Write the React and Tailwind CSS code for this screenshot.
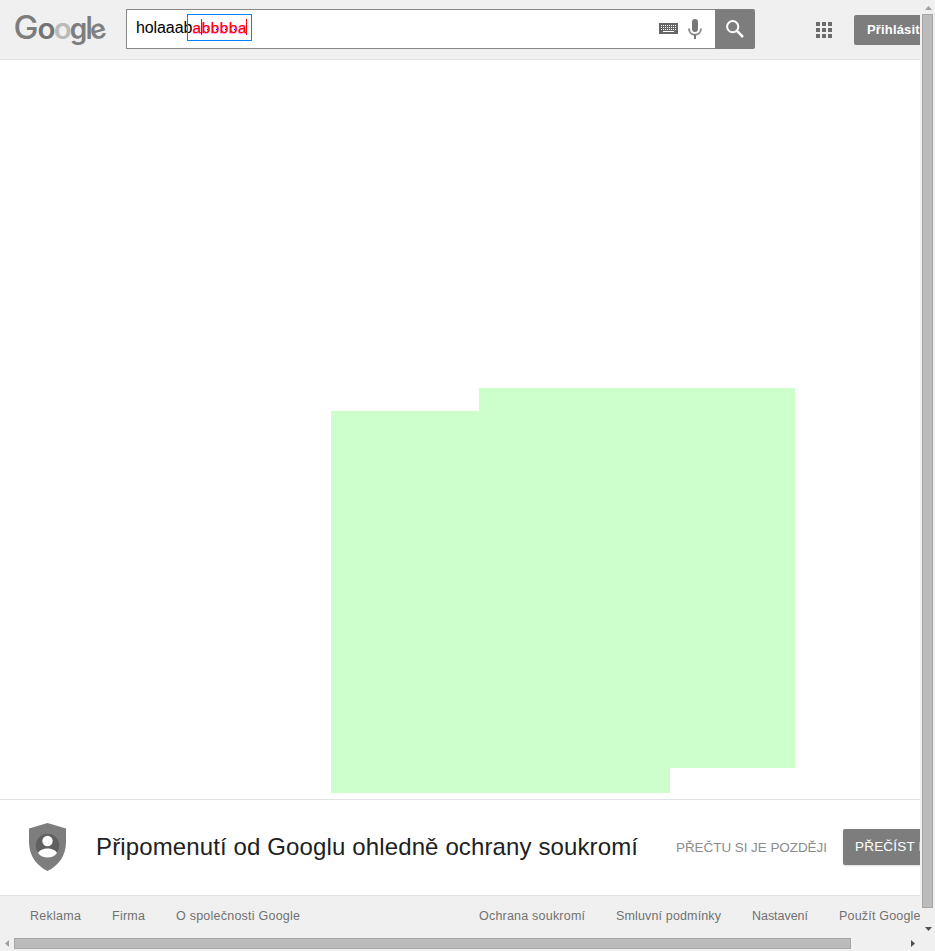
const SANS = "font-['Liberation_Sans',Arial,sans-serif]";

function Logo() {
  return (
    <svg width="96" height="44" viewBox="0 0 96 44" className="shrink-0 overflow-visible font-['Inter',sans-serif] font-semibold" fill="#7d7d7d" aria-label="Google">
      <text x="-0.5" y="27.500" fontSize="32" textLength="25" lengthAdjust="spacingAndGlyphs" className="font-medium">G</text>
      <text x="23.500" y="27.500" fontSize="28.5" textLength="18" lengthAdjust="spacingAndGlyphs" fill="#747474">o</text>
      <text x="39.700" y="27.500" fontSize="28.5" textLength="18" lengthAdjust="spacingAndGlyphs" fill="#bababa">o</text>
      <text x="55.800" y="27.500" fontSize="28" textLength="17.500" lengthAdjust="spacingAndGlyphs">g</text>
      <text x="71.300" y="27.500" fontSize="31" className="font-medium">l</text>
      <text x="76" y="27.500" fontSize="27" textLength="16" lengthAdjust="spacingAndGlyphs" transform="rotate(-16 84 20)" fill="#808080">e</text>
    </svg>
  );
}

function KeyboardIcon() {
  const dots = [];
  for (let r = 0; r < 3; r++) for (let c = 0; c < 8; c++) dots.push([2 + c * 2, 2 + r * 2]);
  return (
    <svg width="19" height="11" className="-mt-[2px] shrink-0" shapeRendering="crispEdges">
      <rect width="19" height="11" fill="#666" />
      {dots.map(([x, y]) => <rect key={`${x}-${y}`} x={x} y={y} width="1" height="1" fill="#fff" />)}
      <rect x="4" y="8" width="11" height="1" fill="#fff" />
    </svg>
  );
}

function MicIcon() {
  return (
    <svg width="14" height="20" viewBox="0 0 14 20" className="shrink-0">
      <rect x="4" y="0" width="6" height="13" rx="3" fill="#777" />
      <path d="M1 9.500c0 3.900 2.600 6.300 6 6.300s6-2.400 6-6.300" fill="none" stroke="#8a8a8a" strokeWidth="1.900" />
      <path d="M7 15.500V20" stroke="#777" strokeWidth="2" />
    </svg>
  );
}

function Header() {
  return (
    <header className="flex h-[60px] shrink-0 items-start border-b border-[#e2e2e2] bg-[#f0f0f0]">
      <div className="ml-[14px] mt-[11px] flex w-[112px] shrink-0"><Logo /></div>
      <div className="mt-[9px] flex h-10 w-[629px] shrink-0">
        <div className="relative flex w-[589px] items-center border border-r-0 border-[#888] bg-white pl-[9px] pr-[13px]">
          <span className="-mt-[3px] whitespace-pre text-base tracking-[-0.1px] text-black">holaaab</span>
          <div className="absolute left-[60px] top-[4px] h-[27px] w-[65px] border border-[#0080ff]">
            <svg width="63" height="25" fontSize="15.500">
              <text x="4" y="18.500" fill="#f0f" fillOpacity="0.45" textLength="54">abbbba</text>
              <text x="4.600" y="18" fill="#f00" stroke="#f00" strokeWidth="0.150" textLength="54">abbbba</text>
              <path d="M13.500 4v16M58.500 4v16" stroke="#f00" />
              <path d="M19 14.500h1M28 14.500h1M37 14.500h1M46 14.500h1" stroke="#00f" />
            </svg>
          </div>
          <div className="ml-auto flex items-center gap-[10px]">
            <KeyboardIcon />
            <MicIcon />
          </div>
        </div>
        <div className="flex w-10 items-center justify-center rounded-r-xs bg-[#7d7d7d]">
          <svg width="18" height="18" viewBox="0 0 18 18" fill="none" stroke="#fff">
            <circle cx="6.700" cy="6.700" r="5.600" strokeWidth="2" />
            <path d="M10.700 10.700L17 17" strokeWidth="2.500" />
          </svg>
        </div>
      </div>
      <div className="ml-[61px] mt-[22px] grid shrink-0 grid-cols-3 gap-[2px]">
        {Array.from({ length: 9 }, (_, i) => <i key={i} className="h-1 w-1 bg-[#6c6c6c]" />)}
      </div>
      <div className="ml-[22px] mt-[15px] h-[30px] w-[90px] shrink-0 rounded-xs bg-[#7d7d7d] pl-[13px] text-[13px] font-bold leading-[30px] tracking-[0.15px] text-white">Přihlásit</div>
    </header>
  );
}

function Notice() {
  return (
    <section className="flex h-[96px] shrink-0 items-center whitespace-nowrap border-t border-[#e2e2e2] bg-white pb-[2px]">
      <svg width="37" height="48" viewBox="0 0 37 48" className="ml-[29px] shrink-0">
        <path d="M18.500 0L37 5.500V19C37 33 29 43 18.500 48C8 43 0 33 0 19V5.500Z" fill="#7d7d7d" />
        <circle cx="18.500" cy="22.500" r="11.700" fill="#5f5f5f" />
        <circle cx="18.500" cy="18" r="5.200" fill="#fff" />
        <path d="M9 30C12 24 25 24 28 30C24 36 13 36 9 30Z" fill="#fff" />
      </svg>
      <h1 className="ml-[30px] w-[580px] shrink-0 text-2xl"><svg width="545" height="32" className="block"><text x="0" y="24" fill="#212121" textLength="542">Připomenutí od Googlu ohledně ochrany soukromí</text></svg></h1>
      <span className="w-[167px] shrink-0 text-[13.5px]"><svg width="155" height="22" className="block"><text x="0" y="16" fill="#8c8c8c" textLength="151">PŘEČTU SI JE POZDĚJI</text></svg></span>
      <div className="h-9 w-[120px] shrink-0 rounded-xs bg-[#7d7d7d] pl-3 text-[13.5px] leading-9 tracking-[0.2px] text-white shadow-sm">PŘEČÍST NYNÍ</div>
    </section>
  );
}

const LINKS = [
  ["Reklama", 82, 51], ["Firma", 64, 33], ["O společnosti Google", 303, 124], ["Ochrana soukromí", 137, 106],
  ["Smluvní podmínky", 136, 105], ["Nastavení", 87, 56], ["Použít Google.cz", 110, 98],
];

function Footer() {
  return (
    <footer className="flex h-[41px] shrink-0 items-center whitespace-nowrap border-t border-[#e2e2e2] bg-[#f0f0f0] pl-[30px] text-[12.5px]">
      {LINKS.map(([label, width, textWidth]) => (
        <a key={label} className="shrink-0" style={{ width }}>
          <svg width="110" height="20" className="block overflow-visible"><text x="0" y="14" fill="#707070" textLength={textWidth}>{label}</text></svg>
        </a>
      ))}
    </footer>
  );
}

export default function App() {
  return (
    <div className={`h-[951px] w-[935px] overflow-hidden bg-[#f0f0f0] ${SANS}`}>
      <div className="flex h-[936px]">
        <div className="flex w-[920px] flex-col overflow-hidden bg-white">
          <Header />
          <main className="flex h-[739px] shrink-0 pl-[331px] pt-[328px]">
            <div className="mt-[23px] h-[382px] w-[148px] bg-[#ccffcc]" />
            <div className="h-[405px] w-[191px] bg-[#ccffcc]" />
            <div className="h-[380px] w-[125px] bg-[#ccffcc]" />
          </main>
          <Notice />
          <Footer />
        </div>
        <div className="flex w-[15px] flex-col items-center pl-px">
          <svg width="9" height="14" className="shrink-0"><path d="M1 10L4.500 6L8 10Z" fill="#a0a0a0" /></svg>
          <div className="-ml-px h-[894px] w-[11px] shrink-0 border border-[#a6a6a6] bg-[#bbb]" />
          <svg width="9" height="9" className="mt-[17px] shrink-0"><path d="M1 2L8 2L4.500 6Z" fill="#505050" /></svg>
        </div>
      </div>
      <div className="flex h-[15px] items-center">
        <svg width="14" height="11" className="shrink-0"><path d="M9 2L5 5.500L9 9Z" fill="#a0a0a0" /></svg>
        <div className="h-[11px] w-[837px] shrink-0 border border-[#a6a6a6] bg-[#bbb]" />
        <svg width="8" height="11" className="ml-[58px] shrink-0"><path d="M2 2L6 5.500L2 9Z" fill="#505050" /></svg>
      </div>
    </div>
  );
}
